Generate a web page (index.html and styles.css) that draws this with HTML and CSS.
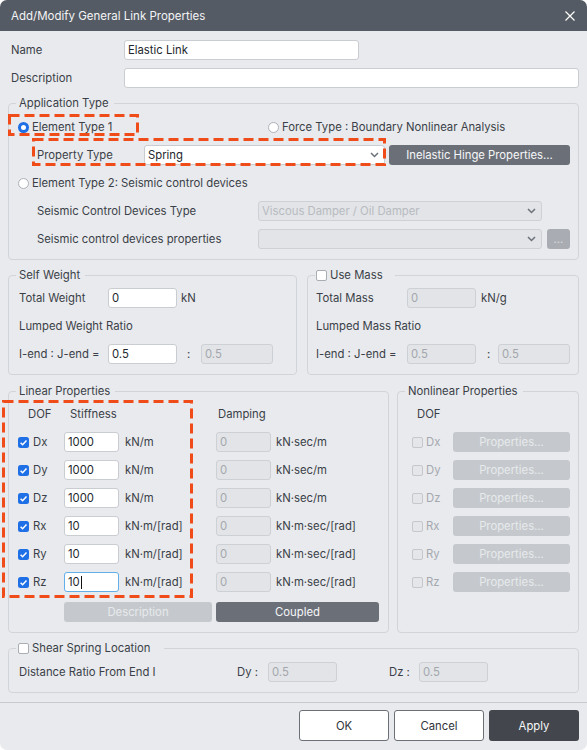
FILE: index.html
```html
<!DOCTYPE html>
<html lang="en">
<head>
<meta charset="utf-8">
<title>Add/Modify General Link Properties</title>
<link rel="stylesheet" href="styles.css">
</head>
<body>
<div class="dialog">
  <div class="titlebar">
    <span class="title">Add/Modify General Link Properties</span>
    <svg class="close" width="10" height="10" viewBox="0 0 10 10"><path d="M0.5 0.5L9.5 9.5M9.5 0.5L0.5 9.5" stroke="#fff" stroke-width="1.2" fill="none"/></svg>
  </div>

  <div class="content">
    <div class="top-row">
      <span class="top-label">Name</span>
      <span class="field w-name">Elastic Link</span>
    </div>
    <div class="top-row">
      <span class="top-label">Description</span>
      <span class="field w-desc"></span>
    </div>

    <fieldset class="group">
      <legend>Application Type</legend>
      <div class="gbody app-body">
        <div class="row">
          <span class="opt opt-et1"><span class="radio on"></span>Element Type 1</span>
          <span class="opt"><span class="radio"></span>Force Type : Boundary Nonlinear Analysis</span>
        </div>
        <div class="row">
          <span class="sub-label w-prop">Property Type</span>
          <span class="field select w-spring">Spring<svg class="chev" width="9" height="6" viewBox="0 0 9 6"><path d="M1 1l3.5 3.5L8 1" stroke="#6c7079" stroke-width="1.5" fill="none"/></svg></span>
          <span class="btn dark w-hinge">Inelastic Hinge Properties...</span>
        </div>
        <div class="row">
          <span class="opt"><span class="radio"></span>Element Type 2: Seismic control devices</span>
        </div>
        <div class="row">
          <span class="sub-label w-seis">Seismic Control Devices Type</span>
          <span class="field select dis w-seis-sel"><span class="ph">Viscous Damper / Oil Damper</span><svg class="chev" width="9" height="6" viewBox="0 0 9 6"><path d="M1 1l3.5 3.5L8 1" stroke="#6c7079" stroke-width="1.5" fill="none"/></svg></span>
        </div>
        <div class="row">
          <span class="sub-label w-seis">Seismic control devices properties</span>
          <span class="field select dis w-seis-sel"><span class="ph"></span><svg class="chev" width="9" height="6" viewBox="0 0 9 6"><path d="M1 1l3.5 3.5L8 1" stroke="#6c7079" stroke-width="1.5" fill="none"/></svg></span>
          <span class="btn mini">...</span>
        </div>
      </div>
    </fieldset>

    <div class="pair pair-weight">
      <fieldset class="group sw">
        <legend>Self Weight</legend>
        <div class="gbody sw-body">
          <div class="row"><span class="sw-lbl">Total Weight</span><span class="field w69">0</span><span class="unit-s">kN</span></div>
          <div class="row">Lumped Weight Ratio</div>
          <div class="row"><span class="sw-lbl">I-end : J-end =</span><span class="field w69">0.5</span><span class="colon sw-colon">:</span><span class="field dis w72">0.5</span></div>
        </div>
      </fieldset>
      <fieldset class="group mass">
        <legend class="cb-legend mass-legend"><span class="cb"></span>Use Mass</legend>
        <div class="gbody mass-body">
          <div class="row"><span class="mass-lbl">Total Mass</span><span class="field dis w69">0</span><span class="unit-s unit-mass">kN/g</span></div>
          <div class="row">Lumped Mass Ratio</div>
          <div class="row"><span class="mass-lbl">I-end : J-end =</span><span class="field dis w69">0.5</span><span class="colon mass-colon">:</span><span class="field dis w72">0.5</span></div>
        </div>
      </fieldset>
    </div>

    <div class="pair pair-props">
      <fieldset class="group linear">
        <legend>Linear Properties</legend>
        <div class="gbody lin-body">
          <div class="row">
            <span class="dofcell"><span class="hdr-dof">DOF</span></span>
            <span class="hdr-stiff">Stiffness</span>
            <span class="hdr-damp">Damping</span>
          </div>
          <div class="row">
            <span class="dofcell"><svg class="cbx" width="11" height="11" viewBox="0 0 11 11"><rect width="11" height="11" rx="2.5" fill="#1f6fe6"/><path d="M2.6 5.7l2 2 3.9-4.3" stroke="#fff" stroke-width="1.5" fill="none"/></svg>Dx</span>
            <span class="field w55">1000</span><span class="unit1">kN/m</span>
            <span class="field dis w55">0</span><span class="unit2">kN·sec/m</span>
          </div>
          <div class="row">
            <span class="dofcell"><svg class="cbx" width="11" height="11" viewBox="0 0 11 11"><rect width="11" height="11" rx="2.5" fill="#1f6fe6"/><path d="M2.6 5.7l2 2 3.9-4.3" stroke="#fff" stroke-width="1.5" fill="none"/></svg>Dy</span>
            <span class="field w55">1000</span><span class="unit1">kN/m</span>
            <span class="field dis w55">0</span><span class="unit2">kN·sec/m</span>
          </div>
          <div class="row">
            <span class="dofcell"><svg class="cbx" width="11" height="11" viewBox="0 0 11 11"><rect width="11" height="11" rx="2.5" fill="#1f6fe6"/><path d="M2.6 5.7l2 2 3.9-4.3" stroke="#fff" stroke-width="1.5" fill="none"/></svg>Dz</span>
            <span class="field w55">1000</span><span class="unit1">kN/m</span>
            <span class="field dis w55">0</span><span class="unit2">kN·sec/m</span>
          </div>
          <div class="row">
            <span class="dofcell"><svg class="cbx" width="11" height="11" viewBox="0 0 11 11"><rect width="11" height="11" rx="2.5" fill="#1f6fe6"/><path d="M2.6 5.7l2 2 3.9-4.3" stroke="#fff" stroke-width="1.5" fill="none"/></svg>Rx</span>
            <span class="field w55">10</span><span class="unit1">kN·m/[rad]</span>
            <span class="field dis w55">0</span><span class="unit2">kN·m·sec/[rad]</span>
          </div>
          <div class="row">
            <span class="dofcell"><svg class="cbx" width="11" height="11" viewBox="0 0 11 11"><rect width="11" height="11" rx="2.5" fill="#1f6fe6"/><path d="M2.6 5.7l2 2 3.9-4.3" stroke="#fff" stroke-width="1.5" fill="none"/></svg>Ry</span>
            <span class="field w55">10</span><span class="unit1">kN·m/[rad]</span>
            <span class="field dis w55">0</span><span class="unit2">kN·m·sec/[rad]</span>
          </div>
          <div class="row">
            <span class="dofcell"><svg class="cbx" width="11" height="11" viewBox="0 0 11 11"><rect width="11" height="11" rx="2.5" fill="#1f6fe6"/><path d="M2.6 5.7l2 2 3.9-4.3" stroke="#fff" stroke-width="1.5" fill="none"/></svg>Rz</span>
            <span class="field focus w55">10<span class="caret"></span></span><span class="unit1">kN·m/[rad]</span>
            <span class="field dis w55">0</span><span class="unit2">kN·m·sec/[rad]</span>
          </div>
          <div class="row lin-btns">
            <span class="btn light w-descbtn">Description</span>
            <span class="btn dark w-coupled">Coupled</span>
          </div>
        </div>
      </fieldset>
      <fieldset class="group nonlinear">
        <legend>Nonlinear Properties</legend>
        <div class="gbody nl-body">
          <div class="row"><span class="hdr-nldof">DOF</span></div>
          <div class="row"><span class="nlcell"><span class="cb dis"></span>Dx</span><span class="btn light w-prop-btn">Properties...</span></div>
          <div class="row"><span class="nlcell"><span class="cb dis"></span>Dy</span><span class="btn light w-prop-btn">Properties...</span></div>
          <div class="row"><span class="nlcell"><span class="cb dis"></span>Dz</span><span class="btn light w-prop-btn">Properties...</span></div>
          <div class="row"><span class="nlcell"><span class="cb dis"></span>Rx</span><span class="btn light w-prop-btn">Properties...</span></div>
          <div class="row"><span class="nlcell"><span class="cb dis"></span>Ry</span><span class="btn light w-prop-btn">Properties...</span></div>
          <div class="row"><span class="nlcell"><span class="cb dis"></span>Rz</span><span class="btn light w-prop-btn">Properties...</span></div>
        </div>
      </fieldset>
    </div>

    <fieldset class="group shear">
      <legend class="cb-legend shear-legend"><span class="cb"></span>Shear Spring Location</legend>
      <div class="gbody shear-body">
        <div class="row">
          <span class="shear-lbl">Distance Ratio From End I</span>
          <span class="axis-lbl">Dy :</span><span class="field dis w69">0.5</span>
          <span class="axis-lbl axis-dz">Dz :</span><span class="field dis w69">0.5</span>
        </div>
      </div>
    </fieldset>
  </div>

  <div class="footer">
    <span class="btn outline">OK</span>
    <span class="btn outline">Cancel</span>
    <span class="btn apply">Apply</span>
  </div>

  <svg class="mark mark1" width="131" height="22" viewBox="0 0 131 22"><rect x="1.5" y="1.5" width="128" height="19" /></svg>
  <svg class="mark mark2" width="354" height="28" viewBox="0 0 354 28"><rect x="1.5" y="1.5" width="351" height="25" /></svg>
  <svg class="mark mark3" width="191" height="198" viewBox="0 0 191 198"><rect x="1.5" y="1.5" width="188" height="195" /></svg>
</div>
</body>
</html>
```

FILE: styles.css
```css
* { box-sizing: border-box; }
html, body { margin: 0; padding: 0; background: #ffffff; }
body {
  font-family: Inter, "Noto Sans", "Liberation Sans", sans-serif;
  font-size: 11.3px;
  color: #3a3f48;
}
.dialog {
  position: relative;
  width: 587px;
  height: 750px;
  background: #e9eaed;
  border-radius: 7px;
  overflow: hidden;
  display: flex;
  flex-direction: column;
}
.titlebar {
  flex: none;
  height: 31px;
  background: #555b64;
  color: #f3f4f6;
  display: flex;
  align-items: center;
  justify-content: space-between;
  padding: 0 12px 0 11px;
}
.title { font-size: 11.5px; }
.close { display: block; }

.content {
  padding: 9px 8px 0;
  display: flex;
  flex-direction: column;
}
.top-row { display: flex; align-items: center; height: 20px; padding-left: 3px; }
.top-row + .top-row { margin-top: 8px; }
.top-label { width: 113px; flex: none; }

.field {
  flex: none;
  height: 20px;
  background: #ffffff;
  border: 1px solid #c9ccd1;
  border-radius: 3px;
  display: flex;
  align-items: center;
  padding: 0 3px;
  color: #23272d;
  white-space: nowrap;
}
.field.dis { background: #e2e4e7; border-color: #cdd0d4; color: #a3a7ad; }
.field.focus { border-color: #62aee8; }
.caret { display: inline-block; width: 1px; height: 13px; background: #111; margin-left: 1px; }
.select { justify-content: space-between; padding-right: 5px; }
.select .chev { flex: none; }
.ph { color: #b8bbc1; }
.w-name { width: 235px; }
.w-desc { flex: 1; }
.w69 { width: 69px; }
.w72 { width: 72px; }
.w55 { width: 55px; }

.group {
  margin: 8px 0 0;
  padding: 0;
  border: 1px solid #d1d4d9;
  border-radius: 4px;
  min-width: 0;
}
.group > legend {
  margin-left: 7px;
  padding: 0 5px 0 3px;
  line-height: 14px;
  color: #3a3f48;
}
.cb-legend { display: flex; align-items: center; gap: 3px; }
.mass-legend { margin-left: 7px; padding: 0 12px 0 1px !important; }
.shear-legend { padding: 0 14px 0 2px !important; }

.gbody { display: flex; flex-direction: column; gap: 8px; padding: 6px 0 10px; }
.row { display: flex; align-items: center; height: 20px; white-space: nowrap; }

.app-body { padding: 7px 0 10px 9px; }
.opt { display: flex; align-items: center; gap: 3px; }
.opt-et1 { width: 250px; flex: none; }
.radio {
  flex: none;
  width: 11px; height: 11px;
  border-radius: 50%;
  background: #fff;
  border: 1px solid #adb1b8;
}
.radio.on { border: 3px solid #1f6fe6; }
.sub-label { margin-left: 19px; flex: none; }
.w-prop { width: 107px; }
.w-spring { width: 241px; }
.w-seis { width: 221px; }
.w-seis-sel { width: 284px; }

.btn {
  flex: none;
  height: 20px;
  border-radius: 3px;
  display: flex;
  align-items: center;
  justify-content: center;
  white-space: nowrap;
}
.btn.dark { background: #6b7078; color: #f6f7f8; }
.btn.light { background: #c5c9ce; color: #e7e9eb; }
.btn.mini { width: 23px; margin-left: 5px; background: #a9adb3; color: #d9dbde; }
.w-hinge { width: 181px; margin-left: 4px; }

.pair { display: flex; gap: 10px; margin-top: 8px; }
.pair > .group { margin-top: 0; }
.sw { width: 289px; flex: none; }
.mass { flex: 1; }
.sw-body { padding-left: 10px; }
.sw-lbl { width: 89px; flex: none; }
.unit-s { margin-left: 4px; }
.unit-mass { margin-left: 5px; }
.colon { flex: none; }
.sw-colon { width: 24px; padding-left: 10px; }
.mass-body { padding-left: 8px; }
.mass-lbl { width: 91px; flex: none; }
.mass-colon { width: 22px; padding-left: 11px; }

.cb {
  flex: none;
  display: inline-block;
  width: 11px; height: 11px;
  border: 1px solid #a9adb4;
  border-radius: 2px;
  background: #fff;
}
.cb.dis { background: #e4e6e9; border-color: #c4c7cc; }
.cbx { flex: none; display: block; }

.pair-props { gap: 8px; margin-top: 9px; }
.linear { width: 381px; flex: none; }
.nonlinear { flex: 1; }
.lin-body { padding-left: 9px; }
.dofcell { width: 46px; flex: none; display: flex; align-items: center; gap: 4px; }
.hdr-dof { padding-left: 10px; }
.hdr-stiff { width: 152px; padding-left: 6px; flex: none; }
.hdr-damp { padding-left: 2px; }
.unit1 { width: 97px; flex: none; padding-left: 6px; }
.unit2 { padding-left: 5px; }
.lin-btns { padding-left: 46px; gap: 4px; margin-top: 2px; }
.w-descbtn { width: 148px; }
.w-coupled { width: 163px; }

.nl-body { padding-left: 14px; color: #a4a8af; }
.hdr-nldof { padding-left: 5px; color: #3a3f48; }
.nlcell { width: 41px; flex: none; display: flex; align-items: center; gap: 3px; }
.w-prop-btn { width: 117px; }

.shear-body { padding: 7px 0 10px 10px; }
.shear-lbl { width: 218px; flex: none; }
.axis-lbl { width: 31px; flex: none; }
.axis-dz { margin-left: 52px; width: 30px; }

.footer {
  flex: none;
  margin-top: 9px;
  border-top: 1px solid #c6c9ce;
  padding: 7px 8px 0;
  display: flex;
  justify-content: flex-end;
  gap: 5px;
}
.footer .btn { width: 90px; height: 31px; }
.btn.outline { background: #fff; border: 1px solid #6b6f76; color: #30343a; }
.btn.apply { background: #43474d; color: #f6f7f8; }

.mark { position: absolute; display: block; }
.mark rect { fill: none; stroke: #f04c1a; stroke-width: 3; stroke-dasharray: 10 5; }
.mark1 { left: 8px; top: 114px; }
.mark2 { left: 32px; top: 138px; }
.mark3 { left: 2px; top: 400px; }
```
